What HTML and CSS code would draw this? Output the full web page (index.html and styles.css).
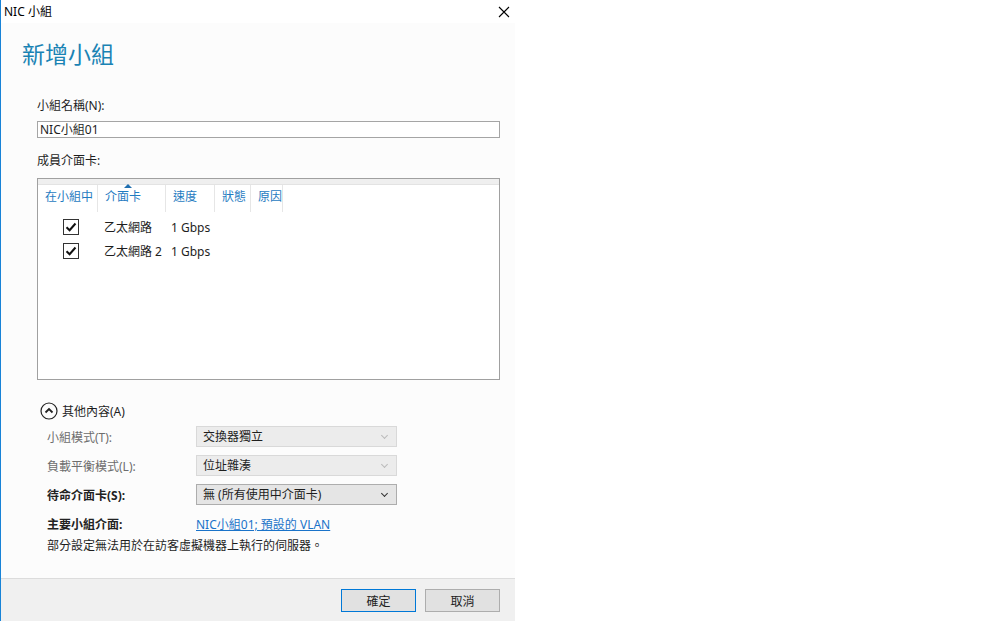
FILE: index.html
```html
<!DOCTYPE html>
<html lang="zh-Hant">
<head>
<meta charset="UTF-8" />
<title>NIC 小組</title>
<link rel="stylesheet" href="styles.css">
</head>
<body>

<div class="dialog">
  <div class="titlebar">
    <span class="title">NIC 小組</span>
    <svg class="close" width="12" height="12" viewBox="0 0 12 12"><path d="M1 1L11 11M11 1L1 11" stroke="#000" stroke-width="1.1" fill="none"/></svg>
  </div>

  <div class="body">
    <h1>新增小組</h1>

    <div class="content">
      <div class="label">小組名稱(N):</div>
      <div class="textbox">NIC小組01</div>

      <div class="label members">成員介面卡:</div>
      <div class="listbox">
        <div class="list-top"></div>
        <div class="list-head">
          <div class="col c1">在小組中</div>
          <div class="col c2">介面卡<span class="sort"></span></div>
          <div class="col c3">速度</div>
          <div class="col c4">狀態</div>
          <div class="col c5">原因</div>
        </div>
        <div class="list-row">
          <div class="cell c1"><span class="check"><svg width="12" height="10" viewBox="0 0 12 10"><path d="M1.5 5.2L4.6 8.2L10.5 1.5" stroke="#111" stroke-width="2" fill="none"/></svg></span></div>
          <div class="cell c2">乙太網路</div>
          <div class="cell">1 Gbps</div>
        </div>
        <div class="list-row">
          <div class="cell c1"><span class="check"><svg width="12" height="10" viewBox="0 0 12 10"><path d="M1.5 5.2L4.6 8.2L10.5 1.5" stroke="#111" stroke-width="2" fill="none"/></svg></span></div>
          <div class="cell c2">乙太網路 2</div>
          <div class="cell">1 Gbps</div>
        </div>
      </div>

      <div class="expander">
        <svg width="18" height="18" viewBox="0 0 18 18"><circle cx="9" cy="9" r="8" stroke="#222" stroke-width="1.2" fill="none"/><path d="M5.5 10.5L9 7L12.5 10.5" stroke="#222" stroke-width="1.8" fill="none"/></svg>
        <span>其他內容(A)</span>
      </div>

      <div class="props">
        <div class="prop disabled">
          <div class="prop-label">小組模式(T):</div>
          <div class="combo">交換器獨立<span class="arrow"></span></div>
        </div>
        <div class="prop disabled">
          <div class="prop-label">負載平衡模式(L):</div>
          <div class="combo">位址雜湊<span class="arrow"></span></div>
        </div>
        <div class="prop">
          <div class="prop-label strong">待命介面卡(S):</div>
          <div class="combo">無 (所有使用中介面卡)<span class="arrow"></span></div>
        </div>
        <div class="prop link-row">
          <div class="prop-label strong">主要小組介面:</div>
          <a class="link" href="#">NIC小組01; 預設的 VLAN</a>
        </div>
        <div class="note">部分設定無法用於在訪客虛擬機器上執行的伺服器。</div>
      </div>
    </div>
  </div>

  <div class="footer">
    <button class="btn default">確定</button>
    <button class="btn">取消</button>
  </div>
</div>

</body>
</html>
```

FILE: styles.css
```css
body {
  margin: 0;
  padding: 0;
  background: #fff;
  font-family: "Noto Sans", "Noto Sans CJK TC", sans-serif;
  font-size: 12px;
  color: #1e1e1e;
}
.dialog {
  width: 514px;
  height: 621px;
  border-left: 1px solid #1883d7;
  background: #fcfcfc;
  display: flex;
  flex-direction: column;
}
.titlebar {
  height: 23px;
  display: flex;
  align-items: center;
  justify-content: space-between;
  padding: 0 4px 0 3px;
  background: #fff;
}
.title {
  font-size: 12px;
  color: #000;
  margin-top: -1px;
}
.close {
  margin-right: 1px;
  margin-top: 1px;
}
.body {
  flex: 1;
}
h1 {
  margin: 15px 0 0 21px;
  font-weight: normal;
  font-size: 23px;
  line-height: 32px;
  color: #1a83b4;
}
.content {
  margin: 28px 0 0 36px;
  width: 463px;
}
.label {
  line-height: 16px;
}
.textbox {
  margin-top: 7px;
  height: 15px;
  line-height: 15px;
  border: 1px solid #a5a5a5;
  background: #fff;
  padding-left: 2px;
}
.label.members {
  margin-top: 15px;
}
.listbox {
  margin-top: 9px;
  height: 200px;
  border: 1px solid #a0a0a0;
  background: #fff;
}
.list-top {
  height: 5px;
  background: #efefef;
  border-bottom: 1px solid #e3e3e3;
}
.list-head {
  display: flex;
  height: 27px;
  color: #1f7bc1;
}
.col {
  padding-left: 7px;
  border-right: 1px solid #e6e6e6;
  line-height: 24px;
  position: relative;
}
.col.c1 { width: 52px; }
.col.c2 { width: 60px; }
.col.c3 { width: 41px; }
.col.c4 { width: 28px; }
.col.c5 { width: 24px; }
.sort {
  position: absolute;
  left: 26px;
  top: -1px;
  border-left: 4px solid transparent;
  border-right: 4px solid transparent;
  border-bottom: 4px solid #1f6fb0;
}
.list-row {
  display: flex;
  height: 24px;
  align-items: center;
}
.list-head + .list-row {
  margin-top: 3px;
}
.list-row .cell.c1 {
  width: 41px;
  padding-right: 25px;
  display: flex;
  justify-content: flex-end;
}
.list-row .cell.c2 {
  width: 67px;
}
.check {
  width: 14px;
  height: 14px;
  border: 1px solid #333;
  display: flex;
  align-items: center;
  justify-content: center;
  background: #fff;
}
.expander {
  display: flex;
  align-items: center;
  gap: 4px;
  margin-top: 22px;
  margin-left: 3px;
  height: 18px;
}
.props {
  margin-left: 10px;
  margin-top: 6px;
}
.prop {
  display: flex;
  align-items: center;
  height: 21px;
  margin-bottom: 8px;
}
.prop-label {
  width: 149px;
}
.prop-label.strong {
  font-weight: bold;
  color: #222;
}
.prop.disabled .prop-label {
  color: #6d6d6d;
}
.combo {
  width: 193px;
  height: 19px;
  line-height: 19px;
  border: 1px solid #adadad;
  background: #e5e5e5;
  padding-left: 6px;
  position: relative;
}
.prop.disabled .combo {
  border-color: #d9d9d9;
  background: #ececec;
}
.arrow {
  position: absolute;
  right: 9px;
  top: 6px;
  width: 4px;
  height: 4px;
  border-right: 1.5px solid #333;
  border-bottom: 1.5px solid #333;
  transform: rotate(45deg);
}
.prop.disabled .arrow {
  border-color: #bbb;
}
.link-row {
  margin-top: 7px;
  margin-bottom: 4px;
}
.link {
  color: #1a73c9;
}
.note {
  line-height: 16px;
}
.footer {
  height: 43px;
  border-top: 1px solid #dcdcdc;
  background: #f0f0f0;
  display: flex;
  justify-content: flex-end;
  align-items: flex-start;
  padding: 10px 15px 0 0;
  gap: 9px;
  box-sizing: border-box;
}
.btn {
  width: 75px;
  height: 23px;
  border: 1px solid #adadad;
  background: #e1e1e1;
  font-family: "Noto Sans", "Noto Sans CJK TC", sans-serif;
  font-size: 12px;
  color: #1e1e1e;
  padding: 0;
}
.btn.default {
  border-color: #0078d7;
}
```
